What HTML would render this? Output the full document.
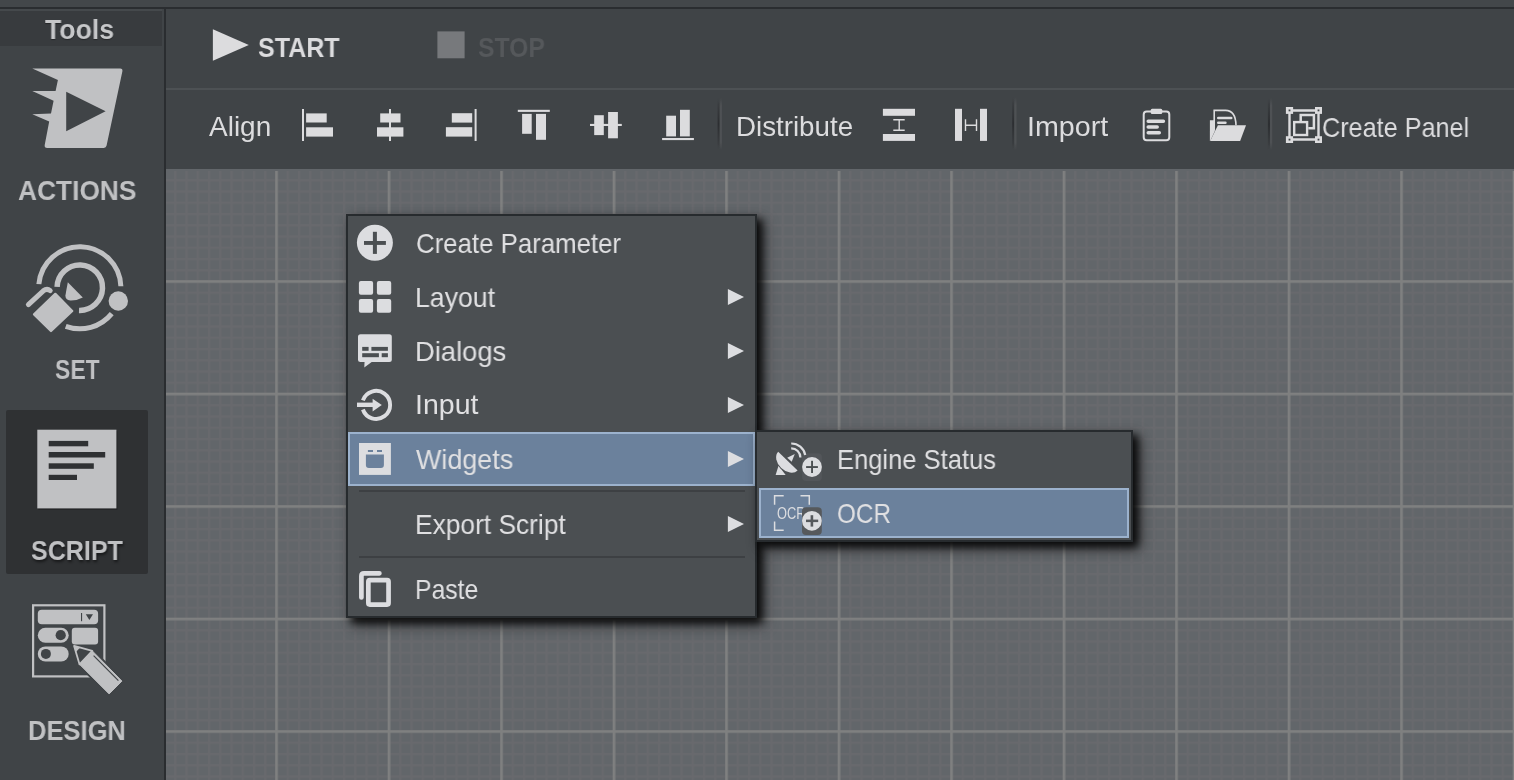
<!DOCTYPE html>
<html><head><meta charset="utf-8">
<style>
*{margin:0;padding:0;box-sizing:border-box}
html,body{width:1514px;height:780px;overflow:hidden;background:#404447;font-family:"Liberation Sans",sans-serif}
.abs{position:absolute}
#topstrip{left:0;top:0;width:1514px;height:7px;background:#43474a}
#topline{left:0;top:7px;width:1514px;height:2px;background:#2a2d30}
#sidebar{left:0;top:9px;width:164px;height:771px;background:#404447}
#sideline{left:164px;top:9px;width:2px;height:771px;background:#2a2d30}
#toolshdr{left:0;top:9px;width:162px;height:37px;background:#383b3e;border-top:2px solid #45494c}
.lbl{position:absolute;white-space:nowrap;line-height:1;transform-origin:0 0;will-change:transform}
#toolbar{left:166px;top:9px;width:1348px;height:160px;background:#404447}
#tbline{left:166px;top:88px;width:1348px;height:2px;background:#4d5154}
#canvas{left:166px;top:169px;width:1348px;height:611px;background-color:#62666a}
.menu{position:absolute;background:#4b4f52;border:2px solid #272b2e;box-shadow:5px 5px 8px rgba(0,0,0,.85),7px 7px 14px rgba(0,0,0,.45)}
.hl{position:absolute;background:#6b819c;border:2px solid #9cb2cd}
.mt{position:absolute;white-space:nowrap;line-height:1;color:#e0e0e2;font-size:26px}
.sep{position:absolute;height:2px;background:#3d4043}
.vsep{position:absolute;width:4px;background:linear-gradient(to right,#35383b 0,#35383b 50%,#4a4e51 50%,#4a4e51 100%)}
</style></head>
<body>
<div id="topstrip" class="abs"></div>
<div id="topline" class="abs"></div>
<div id="sidebar" class="abs"></div>
<div id="toolshdr" class="abs"></div>
<div id="sideline" class="abs"></div>

<div id="toolbar" class="abs"></div>
<div id="tbline" class="abs"></div>
<div id="canvas" class="abs">
<svg width="1348" height="611" style="position:absolute;left:0;top:0">
<defs>
<pattern id="minor" x="-3.1" y="-1.1" width="11.25" height="11.25" patternUnits="userSpaceOnUse">
<rect x="0" y="0" width="2.2" height="11.25" fill="#68696d"/>
<rect x="0" y="0" width="11.25" height="2.2" fill="#68696d"/>
</pattern>
<pattern id="major" x="-3.3" y="-1.3" width="112.5" height="112.5" patternUnits="userSpaceOnUse">
<rect x="0" y="0" width="2.6" height="112.5" fill="#7f8080"/>
<rect x="0" y="0" width="112.5" height="2.6" fill="#7f8080"/>
</pattern>
</defs>
<rect width="1348" height="611" fill="url(#minor)"/>
<rect width="1348" height="611" fill="url(#major)"/>
<rect width="1348" height="2" fill="#62666a"/>
</svg>
</div>

<!-- SCRIPT selected bg -->
<div class="abs" style="left:6px;top:410px;width:142px;height:164px;background:#2f3133;border-radius:2px"></div>

<!-- Menu -->
<div class="menu" style="left:346px;top:214px;width:411px;height:404px"></div>
<div class="hl" style="left:348px;top:432px;width:407px;height:54px"></div>
<div class="sep" style="left:359px;top:490px;width:386px"></div>
<div class="sep" style="left:359px;top:555.5px;width:386px"></div>

<!-- Submenu -->
<div class="menu" style="left:755px;top:430px;width:378px;height:112px"></div>
<div class="hl" style="left:759px;top:488px;width:370px;height:50px"></div>

<svg class="abs" style="left:0;top:0;z-index:5" width="1514" height="780" viewBox="0 0 1514 780">
<!-- ACTIONS icon -->
<path fill="#c0c1c3" fill-rule="evenodd" d="M32.3,68.5 L120.2,68.5 Q122.8,68.5 122.4,71.2 L106.6,145.6 Q106.1,148 103.8,148 L47.3,148 Q44.2,148 44.7,145 L49.2,121.5 L32.3,114.2 L51,113.6 L53.6,100.8 L32.3,91.1 L55.6,91.1 L57.9,80.1 Z M66.2,91.7 L66.2,131.3 L105.6,111.2 Z"/>

<!-- SET icon -->
<g fill="none" stroke="#c0c1c3" stroke-width="5">
<path d="M38.86,284.12 A41.1,41.1 0 0 1 120.87,286.27"/>
<path d="M111.74,313.57 A41.1,41.1 0 0 1 65.74,326.32"/>
<path stroke-width="5.5" d="M57.11,286.91 A22.7,22.7 0 1 1 79.01,310.39"/>
</g>
<circle cx="118.3" cy="301" r="9.7" fill="#c0c1c3"/>
<path fill="#c0c1c3" d="M67.8,282.2 L82.8,297.4 Q77,300.6 70.3,300.4 Q65.3,300 65.4,295.5 Z"/>
<path fill="#c0c1c3" stroke="#c0c1c3" stroke-width="2.4" stroke-linejoin="round" d="M55.3,293.9 L72.2,311 L51,330.9 L34.1,314.4 Z"/>
<path fill="none" stroke="#c0c1c3" stroke-width="5" stroke-linecap="round" d="M28.4,304.6 L43.3,290.8 Q47,287.9 50.2,290.6"/>

<!-- SCRIPT doc icon -->
<rect x="38.3" y="431.2" width="79.1" height="78.7" fill="#1d1e1f" opacity=".55"/>
<rect x="37.3" y="429.7" width="79.1" height="78.7" fill="#c0c1c3"/>
<g fill="#2f3133">
<rect x="48.7" y="440.9" width="39.5" height="5.4"/>
<rect x="48.7" y="452" width="56.5" height="5.5"/>
<rect x="48.7" y="463.3" width="45.1" height="5.5"/>
<rect x="48.7" y="474.8" width="28.3" height="5.2"/>
</g>

<!-- DESIGN icon -->
<g fill="#c0c1c3">
<rect x="33.1" y="605.3" width="71.3" height="71.1" fill="none" stroke="#c0c1c3" stroke-width="2.2"/>
<rect x="37.8" y="609.8" width="60.3" height="14.5" rx="4"/>
<rect x="37.8" y="627.7" width="30.9" height="15.1" rx="7.5"/>
<rect x="71.8" y="627.7" width="26.3" height="16.8" rx="3"/>
<rect x="37.8" y="646.4" width="30.9" height="15" rx="7.5"/>
</g>
<g fill="#404447">
<rect x="81" y="613" width="1.1" height="8.2"/>
<path d="M85.8,614.2 L93,614.2 L89.4,619.9 Z"/>
<circle cx="60.7" cy="635.2" r="5.1"/>
<circle cx="45.9" cy="653.9" r="5"/>
</g>
<path fill="#404447" stroke="#404447" stroke-width="4.4" stroke-linejoin="round" d="M79.5,664.3 L92.3,650.9 L121.9,681.1 L109.1,693.9 Z"/>
<path fill="#c0c1c3" stroke="#c0c1c3" stroke-width="1" stroke-linejoin="round" d="M79.5,664.3 L92.3,650.9 L121.9,681.1 L109.1,693.9 Z"/>
<path fill="none" stroke="#404447" stroke-width="1.2" d="M93.6,655.6 L118.4,680.6"/>
<path fill="#404447" stroke="#c0c1c3" stroke-width="1.8" stroke-linejoin="round" d="M74.1,645.9 L92.3,650.9 L79.5,664.3 Z"/>
<path fill="#c0c1c3" d="M74.1,645.9 L80.2,647.6 L75.7,652.2 Z"/>

<!-- START / STOP -->
<path fill="#dcdcde" d="M212.9,29.3 L248.8,45 L212.9,60.7 Z"/>
<rect x="437.4" y="31.4" width="27.2" height="26.9" fill="#77797c"/>

<!-- Align icons -->
<g fill="#dcdcde">
<rect x="302" y="109" width="2" height="32"/>
<rect x="306.1" y="113.4" width="20.6" height="9.1"/>
<rect x="306.1" y="127.3" width="26.9" height="9.3"/>

<rect x="389" y="109" width="2" height="32"/>
<rect x="380.2" y="113.4" width="20.3" height="9.1"/>
<rect x="377" y="127.3" width="26.4" height="9.3"/>

<rect x="474.6" y="109" width="2" height="32"/>
<rect x="451.8" y="113.2" width="20.4" height="9.4"/>
<rect x="445.9" y="127.2" width="26.3" height="9.4"/>

<rect x="517.8" y="109.8" width="32" height="2.1"/>
<rect x="522.1" y="113.9" width="9.6" height="19.9"/>
<rect x="536" y="113.9" width="10" height="25.9"/>

<rect x="590" y="123.9" width="31.8" height="2.1"/>
<rect x="594.2" y="115.2" width="9.6" height="19.9"/>
<rect x="608.1" y="112" width="9.8" height="26.3"/>

<rect x="662.1" y="138" width="31.8" height="2.1"/>
<rect x="666.2" y="115.7" width="9.8" height="20.7"/>
<rect x="680" y="109.8" width="9.8" height="26.6"/>

<!-- Distribute -->
<rect x="882.9" y="108.8" width="32.1" height="7"/>
<rect x="882.9" y="134" width="32.1" height="6.9"/>
<rect x="955" y="108.8" width="7" height="32.1"/>
<rect x="980" y="108.8" width="7" height="32.1"/>
</g>
<g fill="none" stroke="#dcdcde" stroke-width="1.4">
<path d="M893.3,119.8 H904.7 M899.2,119.8 V130.3 M893.3,130.3 H904.7"/>
<path d="M965.5,119.2 V130.9 M976.5,119.2 V130.9 M965.5,125.3 H976.5"/>
</g>

<!-- Clipboard -->
<g fill="none" stroke="#dcdcde">
<rect x="1143.7" y="111.5" width="25.6" height="28.7" rx="3" stroke-width="2"/>
<path stroke-width="3.5" stroke-linecap="round" d="M1148.2,121.2 H1163.4 M1148.2,127.1 H1157.2 M1148.2,132.8 H1159.3"/>
</g>
<rect x="1150.7" y="108.7" width="11.6" height="5.4" rx="1.5" fill="#dcdcde"/>

<!-- Folder -->
<g fill="#dcdcde">
<path d="M1209.9,120.2 L1214.9,120.2 L1214.9,131 L1210.2,141 L1209.9,141 Z"/>
<path d="M1217.9,125.3 L1246,125.3 L1240.1,141 L1210.2,141 Z"/>
</g>
<path fill="none" stroke="#dcdcde" stroke-width="1.6" d="M1214.2,130 V110.4 H1225.6 Q1235.6,110.4 1236,125.3"/>
<path fill="none" stroke="#dcdcde" stroke-width="2.6" stroke-linecap="round" d="M1218.3,118 H1231.2 M1218.3,122.8 H1225.4"/>

<!-- Create Panel icon -->
<g fill="none" stroke="#dcdcde">
<path stroke-width="2.4" d="M1289.5,110.5 H1318.5 M1289.5,139.5 H1318.5 M1289.5,110.5 V139.5 M1318.5,110.5 V139.5"/>
<path stroke-width="2.5" d="M1300.7,120.9 V115 H1313.9 V128.2 H1308.3"/>
<rect x="1294.2" y="122.1" width="12.9" height="12.9" stroke-width="2.4"/>
</g>
<g fill="#dcdcde">
<rect x="1285.9" y="107" width="7.2" height="6.9"/>
<rect x="1315" y="107" width="7" height="6.9"/>
<rect x="1285.9" y="136.2" width="7.2" height="6.8"/>
<rect x="1315" y="136.2" width="7" height="6.8"/>
</g>
<g fill="#404447">
<rect x="1288.6" y="109.5" width="1.8" height="1.8"/>
<rect x="1317.6" y="109.5" width="1.8" height="1.8"/>
<rect x="1288.6" y="138.7" width="1.8" height="1.8"/>
<rect x="1317.6" y="138.7" width="1.8" height="1.8"/>
</g>

<!-- Menu icons -->
<circle cx="374.9" cy="242.75" r="18" fill="#dcdde0"/>
<g fill="#4b4f52">
<rect x="364" y="241" width="21.9" height="3.9"/>
<rect x="372.9" y="231.8" width="4" height="22.1"/>
</g>
<g fill="#dcdde0">
<rect x="358.9" y="281" width="14.2" height="13.8" rx="2"/>
<rect x="376.9" y="281" width="14.3" height="13.8" rx="2"/>
<rect x="358.9" y="298.9" width="14.2" height="13.8" rx="2"/>
<rect x="376.9" y="298.9" width="14.3" height="13.8" rx="2"/>
<rect x="358" y="334.2" width="33.8" height="27.8" rx="2.5"/>
<path d="M364.6,361 L364.3,367.5 L373,361 Z"/>
</g>
<g fill="#4b4f52">
<rect x="362.2" y="346.9" width="6.4" height="3.9"/>
<rect x="371.4" y="346.9" width="16.5" height="3.9"/>
<rect x="362.2" y="353.2" width="16.7" height="4"/>
<rect x="381.7" y="353.2" width="6.2" height="4"/>
</g>
<path fill="none" stroke="#dcdde0" stroke-width="3.9" d="M362.9,400.3 A14,14 0 1 1 362.9,409.5"/>
<g fill="#dcdde0">
<rect x="357" y="402.6" width="16.5" height="4.4"/>
<path d="M372.6,398.8 L381.8,404.9 L372.6,411.5 Z"/>
<rect x="359" y="443" width="31.9" height="31.9"/>
</g>
<g fill="#6b819c">
<path d="M365.9,454.4 H383.9 V465 Q383.9,468 380.9,468 H368.9 Q365.9,468 365.9,465 Z"/>
<rect x="367.9" y="450" width="5.1" height="2"/>
<rect x="377" y="450" width="5" height="2"/>
</g>
<g fill="none" stroke="#dcdde0" stroke-width="4.7">
<path stroke-linecap="round" d="M361.4,597.5 V576 Q361.4,573.3 364.1,573.3 H379.4"/>
<rect x="368.35" y="580.15" width="20.2" height="24.4" rx="1.5"/>
</g>
<g fill="#dcdde0">
<path d="M727.9,289 L744,297 L727.9,305.1 Z"/>
<path d="M727.9,343 L744,351 L727.9,359.1 Z"/>
<path d="M727.9,397 L744,405 L727.9,413.1 Z"/>
<path d="M727.9,451 L744,459 L727.9,467.1 Z"/>
<path d="M727.9,516 L744,524 L727.9,532.1 Z"/>
</g>

<!-- Engine Status icon -->
<rect x="802.1" y="453.2" width="19.8" height="27.7" rx="4" fill="#53565a"/>
<g fill="#dcdde0">
<path d="M778.6,465.5 L785.6,474.9 L775.6,474.9 Z"/>
<path d="M778.2,451.8 L797.6,470.4 A13.4,9.6 43.8 0 1 778.2,451.8 Z" stroke="#4b4f52" stroke-width="1.6"/>
<path d="M778.2,451.8 L797.6,470.4 A13.4,9.6 43.8 0 1 778.2,451.8 Z"/>
<path d="M787.2,457.7 L794.8,454.1 L791.7,461.7 Z"/>
<circle cx="812" cy="467" r="9.9"/>
</g>
<g fill="none" stroke="#dcdde0" stroke-width="2.2">
<path d="M791.2,443.5 A14,14 0 0 1 805.2,455"/>
<path d="M791.2,448.4 A9.1,9.1 0 0 1 800.4,457.5"/>
</g>
<g fill="#4b4f52">
<rect x="806.1" y="466.1" width="11.8" height="1.9"/>
<rect x="811.1" y="460.8" width="1.9" height="12.2"/>
</g>

<!-- OCR icon -->
<g fill="none" stroke="#dcdde0" stroke-width="1.5">
<path d="M774.6,504.8 V495.7 H783.7"/>
<path d="M800.5,495.7 H809.3 V504.8"/>
<path d="M774.6,521.6 V530.3 H783.7"/>
</g>
<text x="777" y="518.8" font-family="Liberation Sans" font-size="16.5" fill="#dcdde0" textLength="28.5" lengthAdjust="spacingAndGlyphs">OCR</text>
<rect x="802" y="507.2" width="19.8" height="27.8" rx="4" fill="#56595c"/>
<circle cx="811.9" cy="520.8" r="9.9" fill="#dcdde0"/>
<g fill="#56595c">
<rect x="806" y="519.6" width="12.2" height="2.5"/>
<rect x="810.6" y="515.2" width="2.6" height="11.4"/>
</g>

<!-- toolbar groove separators -->
<defs>
<linearGradient id="gdark" x1="0" y1="0" x2="0" y2="1">
<stop offset="0" stop-color="#404447" stop-opacity="0"/>
<stop offset="0.12" stop-color="#3a3d40"/>
<stop offset="0.5" stop-color="#2c2e31"/>
<stop offset="0.88" stop-color="#3a3d40"/>
<stop offset="1" stop-color="#404447" stop-opacity="0"/>
</linearGradient>
<linearGradient id="glight" x1="0" y1="0" x2="0" y2="1">
<stop offset="0" stop-color="#4e5154" stop-opacity="0"/>
<stop offset="0.15" stop-color="#4e5154"/>
<stop offset="0.85" stop-color="#4e5154"/>
<stop offset="1" stop-color="#4e5154" stop-opacity="0"/>
</linearGradient>
</defs>
<rect x="717.6" y="97.7" width="2.1" height="52.5" fill="url(#gdark)"/>
<rect x="719.7" y="97.7" width="2.2" height="52.5" fill="url(#glight)"/>
<rect x="1012.2" y="97" width="2.1" height="53.5" fill="url(#gdark)"/>
<rect x="1014.3" y="97" width="2.2" height="53.5" fill="url(#glight)"/>
<rect x="1267.9" y="97.7" width="2.1" height="52.7" fill="url(#gdark)"/>
<rect x="1270" y="97.7" width="2.2" height="52.7" fill="url(#glight)"/>
</svg>

<!-- LABELS -->
<div class="lbl" style="left:45.00px;top:15.72px;font-size:27.6px;color:#c6c7c9;transform:scaleX(0.9654);font-weight:bold;text-shadow:0 1px 1px rgba(0,0,0,.35)">Tools</div>
<div class="lbl" style="left:17.97px;top:176.62px;font-size:27.6px;color:#c0c1c3;transform:scaleX(0.9539);font-weight:bold">ACTIONS</div>
<div class="lbl" style="left:54.72px;top:356.12px;font-size:27.6px;color:#c0c1c3;transform:scaleX(0.8314);font-weight:bold">SET</div>
<div class="lbl" style="left:30.83px;top:536.62px;font-size:27.6px;color:#c0c1c3;transform:scaleX(0.9080);font-weight:bold;text-shadow:1px 2px 3px rgba(0,0,0,.55)">SCRIPT</div>
<div class="lbl" style="left:27.81px;top:716.72px;font-size:27.6px;color:#c0c1c3;transform:scaleX(0.9251);font-weight:bold">DESIGN</div>
<div class="lbl" style="left:257.83px;top:33.62px;font-size:27.6px;color:#dcdcde;transform:scaleX(0.9073);font-weight:bold">START</div>
<div class="lbl" style="left:477.85px;top:33.62px;font-size:27.6px;color:#55585b;transform:scaleX(0.8959);font-weight:bold">STOP</div>
<div class="lbl" style="left:209.00px;top:112.82px;font-size:27.6px;color:#dcdcde;transform:scaleX(1.0148)">Align</div>
<div class="lbl" style="left:735.65px;top:112.82px;font-size:27.6px;color:#dcdcde;transform:scaleX(1.0044)">Distribute</div>
<div class="lbl" style="left:1026.99px;top:113.02px;font-size:27.6px;color:#dcdcde;transform:scaleX(1.0389)">Import</div>
<div class="lbl" style="left:1321.81px;top:113.62px;font-size:27.6px;color:#dcdcde;transform:scaleX(0.9136)">Create Panel</div>
<div class="lbl" style="left:415.79px;top:229.62px;font-size:27.6px;color:#e0e0e2;transform:scaleX(0.9350)">Create Parameter</div>
<div class="lbl" style="left:415.14px;top:283.72px;font-size:27.6px;color:#e0e0e2;transform:scaleX(0.9660)">Layout</div>
<div class="lbl" style="left:415.24px;top:337.62px;font-size:27.6px;color:#e0e0e2;transform:scaleX(0.9906)">Dialogs</div>
<div class="lbl" style="left:414.59px;top:391.42px;font-size:27.6px;color:#e0e0e2;transform:scaleX(1.0332)">Input</div>
<div class="lbl" style="left:415.81px;top:445.62px;font-size:27.6px;color:#e0e0e2;transform:scaleX(0.9745)">Widgets</div>
<div class="lbl" style="left:415.15px;top:510.62px;font-size:27.6px;color:#e0e0e2;transform:scaleX(0.9544)">Export Script</div>
<div class="lbl" style="left:415.25px;top:575.62px;font-size:27.6px;color:#e0e0e2;transform:scaleX(0.8962)">Paste</div>
<div class="lbl" style="left:836.61px;top:445.72px;font-size:27.6px;color:#e0e0e2;transform:scaleX(0.9253)">Engine Status</div>
<div class="lbl" style="left:836.87px;top:499.52px;font-size:27.6px;color:#e0e0e2;transform:scaleX(0.8793)">OCR</div>
<!-- /LABELS -->
</body></html>
